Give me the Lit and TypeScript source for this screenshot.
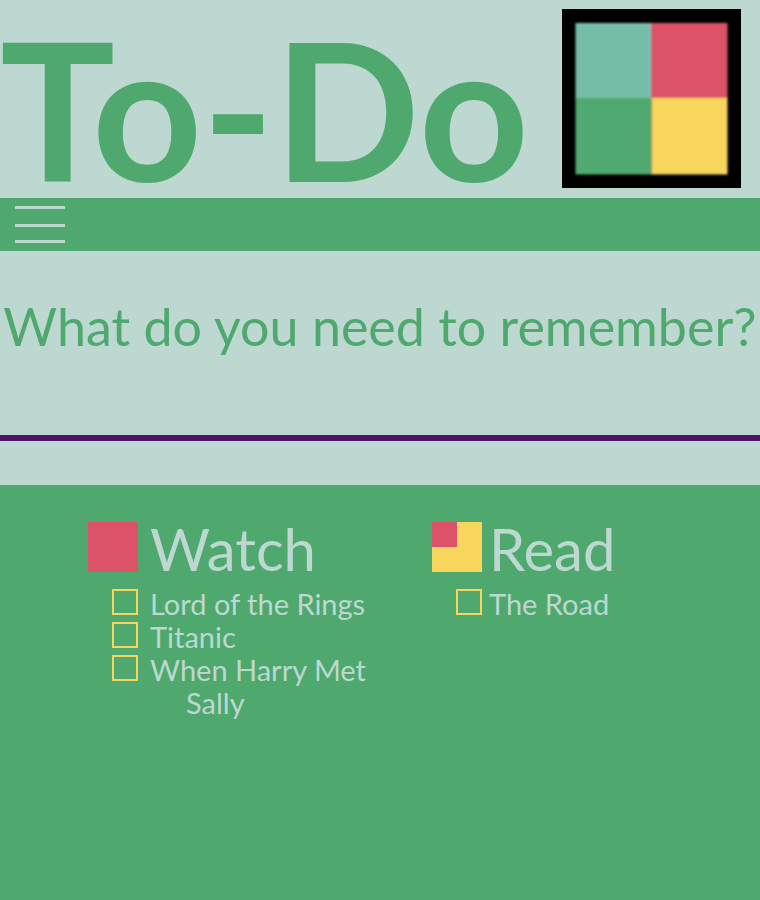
import { LitElement, html, css, svg } from "lit";
import { customElement, property } from "lit/decorators.js";

interface TodoList {
  id: string;
  name: string;
  items: string[];
}

const LISTS: TodoList[] = [
  { id: "watch", name: "Watch", items: ["Lord of the Rings", "Titanic", "When Harry Met Sally"] },
  { id: "read", name: "Read", items: ["The Road"] },
];

@customElement("todo-list")
class TodoListElement extends LitElement {
  @property({ attribute: false }) list!: TodoList;

  static styles = css`
    :host {
      display: block;
      padding-left: 52px;
    }
    .head,
    .row {
      display: flex;
      gap: 12px;
    }
    .read .head,
    .read .row {
      gap: 7px;
    }
    .head {
      height: 50px;
      margin-bottom: 15px;
    }
    .tile {
      flex: none;
      width: 50px;
      height: 50px;
    }
    h2 {
      margin: 0;
      font-size: 58px;
      line-height: 54px;
      font-weight: 400;
    }
    ul {
      margin: 0;
      padding: 0;
      list-style: none;
    }
    .row {
      align-items: flex-start;
    }
    .box {
      appearance: none;
      box-sizing: border-box;
      flex: none;
      width: 26px;
      height: 26px;
      margin: 2px 0 0 24px;
      border: 2px solid #f8d55c;
      border-radius: 0;
      background: transparent;
    }
    .box:checked {
      background: #f8d55c;
    }
    label {
      padding-left: 36px;
      text-indent: -36px;
      font-size: 29px;
      line-height: 33px;
    }
  `;

  render() {
    const { id, name, items } = this.list;
    return html`
      <section class=${id}>
        <div class="head">
          <svg class="tile" viewBox="0 0 50 50" aria-hidden="true">
            ${id === "watch"
              ? svg`<rect width="50" height="50" fill="#dc5268" />`
              : svg`<rect width="50" height="50" fill="#f8d55c" /><rect width="25" height="25" fill="#dc5268" />`}
          </svg>
          <h2>${name}</h2>
        </div>
        <ul>
          ${items.map(
            (item, i) => html`
              <li class="row">
                <input class="box" type="checkbox" id="${id}-${i}" />
                <label for="${id}-${i}">${item}</label>
              </li>
            `,
          )}
        </ul>
      </section>
    `;
  }
}

@customElement("app-root")
class AppRoot extends LitElement {
  static styles = css`
    :host {
      display: flex;
      flex-direction: column;
      min-height: 100vh;
      background: #bcd8d1;
      color: #4fa96f;
      font-family: Lato, "Liberation Sans", sans-serif;
    }
    header {
      box-sizing: border-box;
      display: flex;
      justify-content: space-between;
      align-items: flex-start;
      height: 198px;
      padding: 9px 19px 0 0;
    }
    h1 {
      margin: 0;
      font-size: 192px;
      line-height: 198px;
      font-weight: 700;
      white-space: nowrap;
    }
    .logo {
      flex: none;
      width: 179px;
      height: 179px;
    }
    nav {
      display: flex;
      align-items: center;
      height: 53px;
      padding-left: 15px;
      background: #4fa96f;
    }
    .menu {
      display: flex;
      padding: 0;
      border: 0;
      background: none;
      color: #bcd8d1;
      cursor: pointer;
    }
    .prompt {
      box-sizing: border-box;
      min-height: 190px;
      padding-top: 39px;
      border-bottom: 6px solid #4e1463;
    }
    .question {
      margin: 0;
      font-size: 52px;
      line-height: 72px;
      font-weight: 400;
      text-align: center;
    }
    main {
      flex: 1;
      display: grid;
      grid-template-columns: 1fr 1fr;
      align-items: start;
      margin-top: 44px;
      padding: 37px 36px;
      background: #4fa96f;
      color: #bcd8d1;
    }
  `;

  render() {
    return html`
      <header>
        <h1>To-Do</h1>
        <svg class="logo" viewBox="0 0 179 179" role="img" aria-label="To-Do logo">
          <defs>
            <filter id="soft"><feGaussianBlur stdDeviation="0.8" /></filter>
          </defs>
          <rect width="179" height="179" fill="#000" />
          <g filter="url(#soft)">
            <rect x="13.5" y="14" width="76" height="76" fill="#74bda8" />
            <rect x="89" y="14" width="76.5" height="76" fill="#dc5268" />
            <rect x="13.5" y="89" width="76" height="76.5" fill="#4fa96f" />
            <rect x="89.5" y="89" width="76" height="76.5" fill="#f8d55c" />
          </g>
        </svg>
      </header>
      <nav>
        <button class="menu" type="button" aria-label="Menu">
          <svg width="50" height="37" viewBox="0 0 50 37" fill="currentColor" aria-hidden="true">
            <rect width="50" height="3" />
            <rect y="18" width="50" height="3" />
            <rect y="34" width="50" height="3" />
          </svg>
        </button>
      </nav>
      <section class="prompt">
        <h2 class="question">What do you need to remember?</h2>
      </section>
      <main>${LISTS.map((list) => html`<todo-list .list=${list}></todo-list>`)}</main>
    `;
  }
}
